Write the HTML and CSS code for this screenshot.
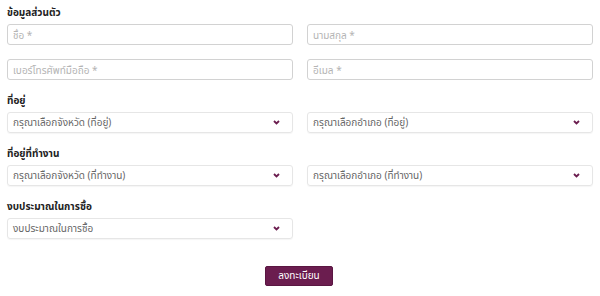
FILE: index.html
```html
<!DOCTYPE html>
<html lang="th">
    <head>
        <title>ลงทะเบียน</title>
        <meta charset="UTF-8">
        <meta name="viewport" content="width=device-width, initial-scale=1.0">
        <link rel="stylesheet" href="styles.css">
    </head>
    <body>
        <form class="form">
            <div class="section">
                <div class="section-title">ข้อมูลส่วนตัว</div>
                <div class="row">
                    <input class="field" type="text" placeholder="ชื่อ *">
                    <input class="field" type="text" placeholder="นามสกุล *">
                </div>
                <div class="row">
                    <input class="field" type="text" placeholder="เบอร์โทรศัพท์มือถือ *">
                    <input class="field" type="text" placeholder="อีเมล *">
                </div>
            </div>
            <div class="section">
                <div class="section-title">ที่อยู่</div>
                <div class="row">
                    <div class="select">
                        <span>กรุณาเลือกจังหวัด (ที่อยู่)</span>
                        <svg class="chevron" viewBox="0 0 7 5"><path d="M1 1 L3.5 3.5 L6 1"/></svg>
                    </div>
                    <div class="select">
                        <span>กรุณาเลือกอำเภอ (ที่อยู่)</span>
                        <svg class="chevron" viewBox="0 0 7 5"><path d="M1 1 L3.5 3.5 L6 1"/></svg>
                    </div>
                </div>
            </div>
            <div class="section">
                <div class="section-title">ที่อยู่ที่ทำงาน</div>
                <div class="row">
                    <div class="select">
                        <span>กรุณาเลือกจังหวัด (ที่ทำงาน)</span>
                        <svg class="chevron" viewBox="0 0 7 5"><path d="M1 1 L3.5 3.5 L6 1"/></svg>
                    </div>
                    <div class="select">
                        <span>กรุณาเลือกอำเภอ (ที่ทำงาน)</span>
                        <svg class="chevron" viewBox="0 0 7 5"><path d="M1 1 L3.5 3.5 L6 1"/></svg>
                    </div>
                </div>
            </div>
            <div class="section">
                <div class="section-title">งบประมาณในการซื้อ</div>
                <div class="row">
                    <div class="select">
                        <span>งบประมาณในการซื้อ</span>
                        <svg class="chevron" viewBox="0 0 7 5"><path d="M1 1 L3.5 3.5 L6 1"/></svg>
                    </div>
                </div>
            </div>
            <div class="actions">
                <button class="submit" type="button">ลงทะเบียน</button>
            </div>
        </form>
    </body>
</html>
```

FILE: styles.css
```css
body {
    margin: 0;
    background-color: #FFFFFF;
    font-family: 'Noto Sans', 'Noto Sans Thai', sans-serif;
    font-size: 10px;
    color: #555555;
}

.form {
    padding: 0 7px;
}

.section {
    margin-bottom: 8px;
}

.section-title {
    height: 24px;
    line-height: 24px;
    font-weight: bold;
    color: #222222;
}

.row {
    display: grid;
    grid-template-columns: 286px 286px;
    column-gap: 14px;
    margin-bottom: 14px;
}
.section .row:last-child {
    margin-bottom: 0;
}

.field {
    display: block;
    box-sizing: border-box;
    width: 100%;
    height: 21px;
    margin: 0;
    padding: 0 5px;
    border: 1px solid #D2D2D2;
    border-radius: 3px;
    font-family: inherit;
    font-size: 10px;
    color: #555555;
    background-color: #FFFFFF;
    outline: none;
}
.field::placeholder {
    color: #B4B4B4;
}

.select {
    display: flex;
    align-items: center;
    justify-content: space-between;
    box-sizing: border-box;
    height: 21px;
    padding: 0 12px 0 5px;
    border: 1px solid #E6E6E6;
    border-radius: 3px;
    box-shadow: 0 1px 1px rgba(0, 0, 0, 0.04);
    color: #666666;
}

.chevron {
    width: 7px;
    height: 5px;
    fill: none;
    stroke: #6B1D4F;
    stroke-width: 1.8;
}

.actions {
    display: flex;
    justify-content: center;
    padding-top: 19px;
}

.submit {
    width: 68px;
    height: 20px;
    margin-left: -2px;
    padding: 0;
    border: 1px solid #5A1642;
    border-radius: 2px;
    background-color: #6B1D4F;
    color: #FFFFFF;
    font-family: inherit;
    font-size: 10px;
}
```
